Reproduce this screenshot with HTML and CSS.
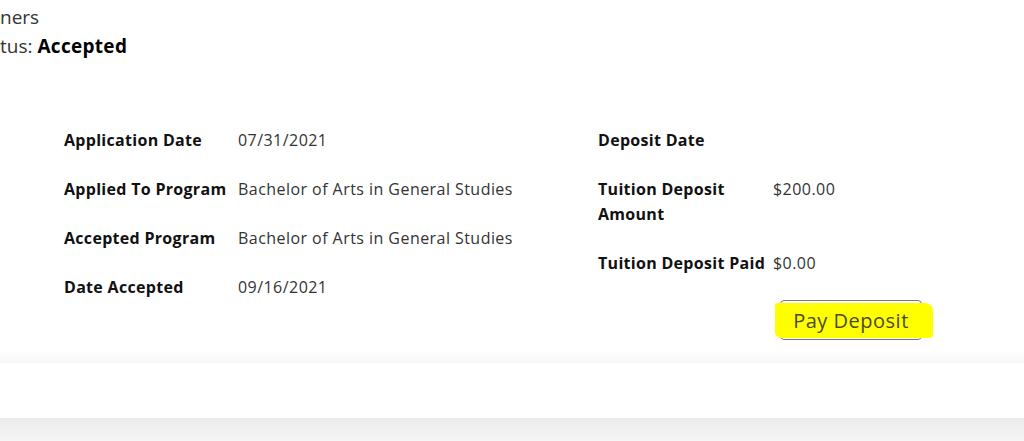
FILE: index.html
```html
<!DOCTYPE html>
<html lang="en">
<head>
<meta charset="utf-8">
<title>Application Status</title>
<link rel="stylesheet" href="styles.css">
</head>
<body>
<section class="card">
  <div class="heading">
    <div class="heading-line">ners</div>
    <div class="heading-line">tus: <strong>Accepted</strong></div>
  </div>
  <div class="details">
    <dl class="col col-left">
      <div class="row"><dt>Application Date</dt><dd>07/31/2021</dd></div>
      <div class="row"><dt>Applied To Program</dt><dd>Bachelor of Arts in General Studies</dd></div>
      <div class="row"><dt>Accepted Program</dt><dd>Bachelor of Arts in General Studies</dd></div>
      <div class="row"><dt>Date Accepted</dt><dd>09/16/2021</dd></div>
    </dl>
    <dl class="col col-right">
      <div class="row"><dt>Deposit Date</dt><dd></dd></div>
      <div class="row"><dt>Tuition Deposit Amount</dt><dd>$200.00</dd></div>
      <div class="row"><dt>Tuition Deposit Paid</dt><dd>$0.00</dd></div>
      <div class="row"><dt></dt><dd><button class="pay-btn" type="button">Pay Deposit</button></dd></div>
    </dl>
  </div>
</section>
<div class="card-shadow"></div>
<div class="spacer"></div>
<div class="next-band"></div>
</body>
</html>
```
FILE: styles.css
```css
html, body {
  margin: 0;
  padding: 0;
  background: #ffffff;
  overflow: hidden;
}

body {
  font-family: "Open Sans", "Noto Sans", "Liberation Sans", sans-serif;
  color: #333333;
  width: 1024px;
}

.card {
  background: #ffffff;
  padding: 3px 0 11px 0;
}

.heading {
  font-size: 19px;
  line-height: 29px;
  color: #333333;
}

.heading strong {
  color: #000000;
  font-weight: 700;
  letter-spacing: 0.3px;
}

.details {
  display: grid;
  grid-template-columns: 534px 1fr;
  margin: 67px 0 0 64px;
}

.col {
  margin: 0;
  display: flex;
  flex-direction: column;
  gap: 24px;
}

.row {
  display: grid;
  grid-template-columns: 174px 1fr;
  font-size: 16px;
  line-height: 25px;
}

.col-right .row {
  grid-template-columns: 175px 1fr;
}

dt {
  font-weight: 700;
  color: #111111;
  letter-spacing: 0.3px;
}

dd {
  margin: 0;
  color: #333333;
  letter-spacing: 0.45px;
}

.pay-btn {
  position: relative;
  margin-left: 7px;
  height: 40px;
  width: 142px;
  padding: 0;
  font-family: inherit;
  font-size: 20px;
  letter-spacing: 0.5px;
  color: #4a4a2a;
  background: transparent;
  border: 1px solid #777777;
  border-radius: 4px;
  z-index: 0;
}

.pay-btn::before {
  content: "";
  position: absolute;
  top: 2px;
  bottom: 1px;
  left: -6px;
  right: -12px;
  background: #ffff00;
  border-radius: 3px 8px 4px 6px;
  z-index: -1;
}

.card-shadow {
  height: 12px;
  background: linear-gradient(#ffffff, #f6f6f6);
}

.spacer {
  height: 55px;
  background: #ffffff;
}

.next-band {
  height: 30px;
  background: linear-gradient(#ebebeb, #f9f9f9);
}
```
